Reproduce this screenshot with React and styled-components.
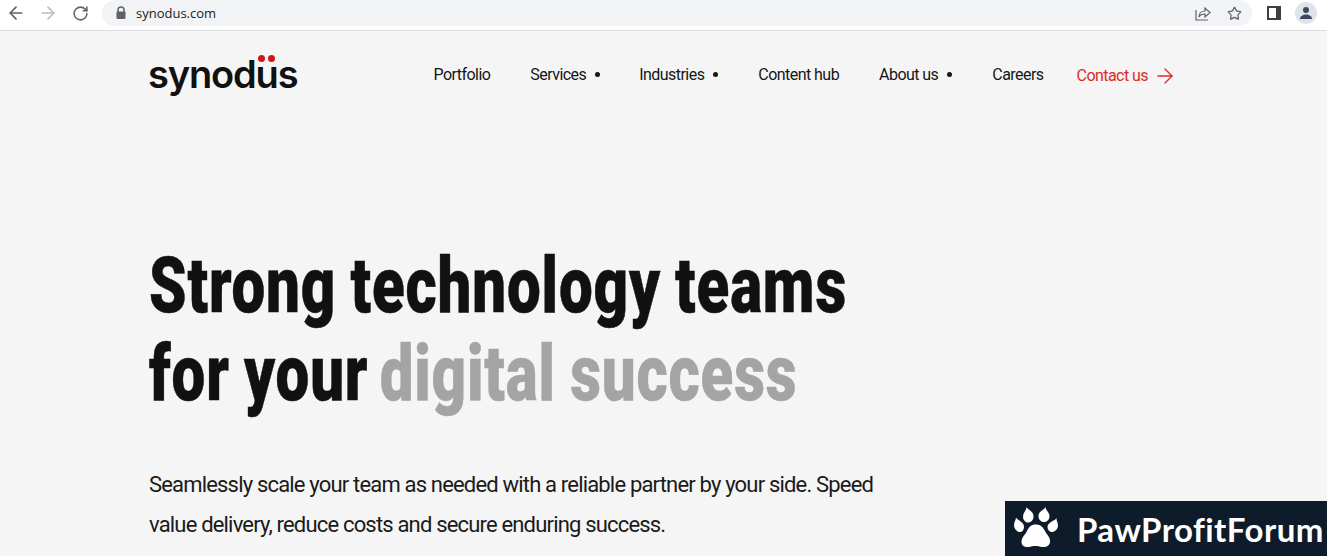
import React from 'react';
import styled, { createGlobalStyle } from 'styled-components';
import { ArrowLeft, ArrowRight, RotateCw, Star } from 'lucide-react';

const GlobalStyle = createGlobalStyle`
  html, body {
    margin: 0;
    padding: 0;
    height: 100%;
    overflow: hidden;
    background: #f5f5f5;
    font-family: "Roboto", "Liberation Sans", sans-serif;
  }
`;

const Page = styled.div`
  position: relative;
  width: 1327px;
  height: 556px;
  overflow: hidden;
  background: #f5f5f5;
`;

const BrowserBar = styled.div`
  display: flex;
  align-items: center;
  height: 26px;
  padding: 0 10px 4px 6px;
  background: #fff;
  border-bottom: 1px solid #dadce0;
  box-sizing: content-box;
`;

const NavIcons = styled.div`
  display: flex;
  align-items: center;
  gap: 12px;
  margin-right: 12px;
`;

const NavIcon = styled.span`
  display: flex;
  width: 20px;
  justify-content: center;
  color: ${(p) => (p.$dim ? '#bdbec0' : '#5f6368')};
`;

const Omnibox = styled.div`
  flex: 1;
  display: flex;
  align-items: center;
  height: 26px;
  padding: 0 10px 0 13px;
  background: #f1f3f4;
  border-radius: 13px;
`;

const Url = styled.span`
  margin-left: 9px;
  font-family: "Open Sans", sans-serif;
  font-size: 13px;
  color: #202124;
  flex: 1;
`;

const OmniActions = styled.div`
  display: flex;
  align-items: center;
  gap: 15px;
  color: #5f6368;
`;

const BrowserRight = styled.div`
  display: flex;
  align-items: center;
  gap: 14px;
  margin-left: 15px;
`;

const SidePanel = styled.span`
  display: block;
  width: 14px;
  height: 14px;
  box-sizing: border-box;
  border: 2px solid #3c4043;
  border-right-width: 5px;
  background: #fff;
`;

const Avatar = styled.span`
  display: flex;
  align-items: center;
  justify-content: center;
  width: 22px;
  height: 22px;
  border-radius: 50%;
  background: #dfe3eb;
`;

const Content = styled.main`
  padding: 0 0 0 149px;
`;

const Header = styled.header`
  display: flex;
  align-items: center;
  justify-content: space-between;
  width: 1028px;
  height: 88px;
`;

const Logo = styled.div`
  position: relative;
  font-family: "Inter", "Liberation Sans", sans-serif;
  font-size: 38px;
  font-weight: 600;
  letter-spacing: -1.15px;
  line-height: 40px;
  color: #111;
  margin-top: -2px;
  margin-left: -1px;
`;

const LogoDots = styled.span`
  position: absolute;
  left: 110px;
  top: 1px;
  display: flex;
  gap: 3px;
`;

const LogoDot = styled.i`
  display: block;
  width: 7px;
  height: 7px;
  border-radius: 50%;
  background: #d3190f;
`;

const Nav = styled.nav`
  display: flex;
  align-items: center;
  font-size: 16px;
  letter-spacing: -0.55px;
  color: #161616;
  margin-top: -1px;
`;

const NavItem = styled.a`
  display: flex;
  align-items: center;
  margin-right: ${(p) => p.$gap}px;
`;

const Bullet = styled.i`
  display: block;
  width: 5px;
  height: 5px;
  margin-left: 9px;
  border-radius: 50%;
  background: #161616;
`;

const ContactLink = styled.a`
  display: flex;
  align-items: center;
  gap: 5px;
  color: #dc2a24;
  margin-top: 2px;
`;

const Headline = styled.h1`
  margin: 123px 0 0;
  width: 900px;
  font-family: "Roboto", sans-serif;
  font-size: 78px;
  font-weight: 900;
  line-height: 88px;
  letter-spacing: 1.08px;
  word-spacing: -2px;
  color: #111;
  -webkit-text-stroke: 0.5px currentColor;
  transform: scaleX(0.77);
  transform-origin: left top;
  white-space: nowrap;
`;

const Muted = styled.span`
  margin-left: -4px;
  color: #a4a4a4;
`;

const Lead = styled.p`
  margin: 47px 0 0;
  width: 760px;
  font-size: 22px;
  line-height: 40px;
  letter-spacing: -0.82px;
  color: #1a1a1a;
`;

const ForumBadge = styled.div`
  position: absolute;
  right: 0;
  bottom: 0;
  display: flex;
  align-items: center;
  gap: 18px;
  width: 322px;
  height: 55px;
  padding-left: 8px;
  box-sizing: border-box;
  background: #0d1b2a;
  color: #fff;
  font-family: "Lato", sans-serif;
  font-size: 33px;
  font-weight: 700;
  letter-spacing: 0.45px;
  white-space: nowrap;
`;

const PawIcon = () => (
  <svg width="46" height="48" viewBox="8 3 46 48" fill="#fff">
    <path d="M21.7 5C22.500 8 29 9 28.500 15C28.200 19 25 20.500 23.300 20.500C21 20.500 18 18.500 18 14.500C18 11 21 9 21.700 5z" />
    <path d="M40.700 4.500C40 8 44.500 10 44.500 14C44.500 18 41.500 20 39 20C36.500 20 33.500 18 33.500 14C33.500 9 39.500 8 40.700 4.500z" />
    <path d="M11 15.500C12 18 19 19.500 19 25C19 28 17 30 15 30C12 30 9 27 9 23C9 20 11 18 11 15.500z" />
    <path d="M51.700 16C51 18.500 53 20 53 23.500C53 27 50 30 47 30C45 30 42.500 28 42.500 25C42.500 20 50 19 51.700 16z" />
    <path d="M30.500 22.500C35 22 38 25 40 29C42 33 45.500 35 45 40C44.500 44 41 45.500 37 45C34 44.500 33 44 30.500 44C28 44 26 44.500 23.500 45C19.500 45.500 16.500 43.500 16.500 40C16.500 35.500 20 33 22 29C24 25 26 22.500 30.500 22.500z" />
  </svg>
);

const LockIcon = () => (
  <svg width="12" height="14" viewBox="0 0 12 14">
    <path d="M3 6V4a3 3 0 0 1 6 0v2" fill="none" stroke="#5f6368" strokeWidth="1.5" />
    <rect x="1.500" y="5.500" width="9" height="7.500" rx="1" fill="#5f6368" />
  </svg>
);

export default function App() {
  return (
    <Page>
      <GlobalStyle />
      <BrowserBar>
        <NavIcons>
          <NavIcon><ArrowLeft size={20} strokeWidth={2} /></NavIcon>
          <NavIcon $dim><ArrowRight size={20} strokeWidth={2} /></NavIcon>
          <NavIcon><RotateCw size={17} strokeWidth={2.2} /></NavIcon>
        </NavIcons>
        <Omnibox>
          <LockIcon />
          <Url>synodus.com</Url>
          <OmniActions>
            <svg width="18" height="18" viewBox="0 0 18 18" fill="none" stroke="#5f6368" strokeWidth="1.2">
              <path d="M2 6v10h12" />
              <path d="M5 13c0-4 3-6 6-6V4l5 4.500L11 13v-3c-3 0-5 1-6 3z" />
            </svg>
            <Star size={15} strokeWidth={2} />
          </OmniActions>
        </Omnibox>
        <BrowserRight>
          <SidePanel />
          <Avatar>
            <svg width="14" height="14" viewBox="0 0 14 14" fill="#3c4a5e">
              <circle cx="7" cy="4" r="3" />
              <path d="M1 13c0-3 3-4.500 6-4.500s6 1.500 6 4.500z" />
            </svg>
          </Avatar>
        </BrowserRight>
      </BrowserBar>
      <Content>
        <Header>
          <Logo>
            synodus
            <LogoDots><LogoDot /><LogoDot /></LogoDots>
          </Logo>
          <Nav>
            <NavItem $gap={40}>Portfolio</NavItem>
            <NavItem $gap={39}>Services<Bullet /></NavItem>
            <NavItem $gap={40}>Industries<Bullet /></NavItem>
            <NavItem $gap={40}>Content hub</NavItem>
            <NavItem $gap={40}>About us<Bullet /></NavItem>
            <NavItem $gap={33}>Careers</NavItem>
            <ContactLink>
              Contact us
              <ArrowRight size={24} strokeWidth={1.4} />
            </ContactLink>
          </Nav>
        </Header>
        <Headline>
          Strong technology teams
          <br />
          for your <Muted>digital success</Muted>
        </Headline>
        <Lead>
          Seamlessly scale your team as needed with a reliable partner by your side. Speed value delivery, reduce costs and secure enduring success.
        </Lead>
      </Content>
      <ForumBadge>
        <PawIcon />
        PawProfitForum
      </ForumBadge>
    </Page>
  );
}
